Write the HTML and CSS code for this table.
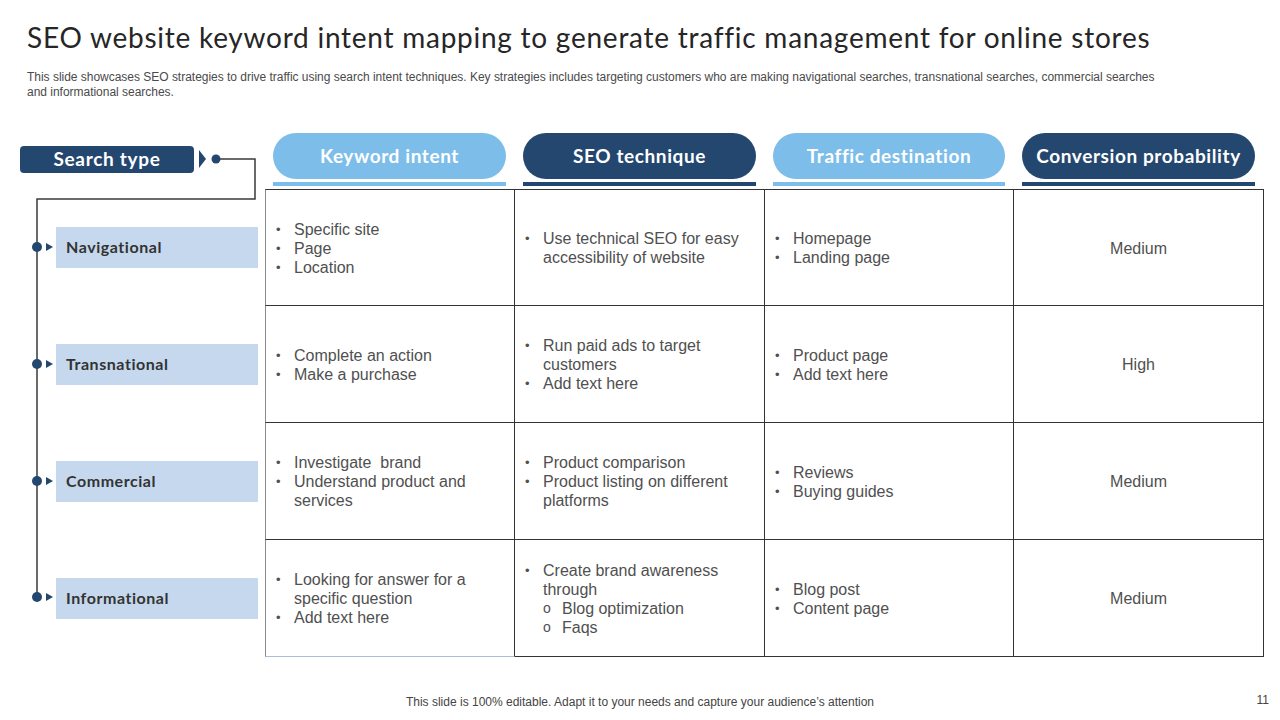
FILE: index.html
```html
<!DOCTYPE html>
<html>
<head>
<meta charset="utf-8">
<link rel="stylesheet" href="styles.css">
</head>
<body>
<div class="slide">
  <header class="head">
    <h1 class="title">SEO website keyword intent mapping to generate traffic management for online stores</h1>
    <p class="desc">This slide showcases SEO strategies to drive traffic using search intent techniques. Key strategies includes targeting customers who are making navigational searches, transnational searches, commercial searches and informational searches.</p>
  </header>

  <svg class="connectors" width="270" height="620" viewBox="0 0 270 620">
    <polyline points="216,159 255,159 255,199 37,199 37,597" fill="none" stroke="#3a3a3a" stroke-width="1.5"/>
    <polygon points="199,150 206,159 199,168" fill="#24476f"/>
    <circle cx="216" cy="159" r="4.5" fill="#24476f"/>
    <circle cx="37" cy="247" r="5" fill="#24476f"/>
    <polygon points="46,243 53,247 46,251" fill="#24476f"/>
    <circle cx="37" cy="364" r="5" fill="#24476f"/>
    <polygon points="46,360 53,364 46,368" fill="#24476f"/>
    <circle cx="37" cy="481" r="5" fill="#24476f"/>
    <polygon points="46,477 53,481 46,485" fill="#24476f"/>
    <circle cx="37" cy="597" r="5" fill="#24476f"/>
    <polygon points="46,593 53,597 46,601" fill="#24476f"/>
  </svg>

  <main class="grid">
    <div class="side-head"><div class="search-type">Search type</div></div>
    <div class="col-head"><div class="pill light">Keyword intent</div><div class="bar light"></div></div>
    <div class="col-head"><div class="pill dark">SEO technique</div><div class="bar dark"></div></div>
    <div class="col-head"><div class="pill light">Traffic destination</div><div class="bar light"></div></div>
    <div class="col-head"><div class="pill dark">Conversion probability</div><div class="bar dark"></div></div>

    <div class="side"><div class="label">Navigational</div></div>
    <div class="cell c1 r1"><ul><li>Specific site</li><li>Page</li><li>Location</li></ul></div>
    <div class="cell r1"><ul><li>Use technical SEO for easy accessibility of website</li></ul></div>
    <div class="cell r1"><ul><li>Homepage</li><li>Landing page</li></ul></div>
    <div class="cell c4 r1">Medium</div>

    <div class="side"><div class="label">Transnational</div></div>
    <div class="cell c1"><ul><li>Complete an action</li><li>Make a purchase</li></ul></div>
    <div class="cell"><ul><li>Run paid ads to target customers</li><li>Add text here</li></ul></div>
    <div class="cell"><ul><li>Product page</li><li>Add text here</li></ul></div>
    <div class="cell c4">High</div>

    <div class="side"><div class="label">Commercial</div></div>
    <div class="cell c1"><ul><li>Investigate&nbsp; brand</li><li>Understand product and services</li></ul></div>
    <div class="cell"><ul><li>Product comparison</li><li>Product listing on different platforms</li></ul></div>
    <div class="cell"><ul><li>Reviews</li><li>Buying guides</li></ul></div>
    <div class="cell c4">Medium</div>

    <div class="side"><div class="label">Informational</div></div>
    <div class="cell c1 last"><ul><li>Looking for answer for a specific question</li><li>Add text here</li></ul></div>
    <div class="cell last"><ul><li>Create brand awareness through<ul class="sub"><li>Blog optimization</li><li>Faqs</li></ul></li></ul></div>
    <div class="cell last"><ul><li>Blog post</li><li>Content page</li></ul></div>
    <div class="cell c4 last">Medium</div>
  </main>

  <footer class="foot">
    <span class="note">This slide is 100% editable. Adapt it to your needs and capture your audience’s attention</span>
    <span class="page">11</span>
  </footer>
</div>
</body>
</html>
```

FILE: styles.css
```css
* { box-sizing: border-box; }
html, body { margin: 0; padding: 0; background: #fff; }
.slide {
  position: relative;
  width: 1280px;
  height: 720px;
  overflow: hidden;
  font-family: "Liberation Sans", Arial, sans-serif;
  color: #404040;
}
.head { padding: 20px 0 0 27px; height: 133px; }
.title {
  margin: 0;
  font-family: "Lato", "Liberation Sans", sans-serif;
  font-weight: 400;
  font-size: 28px;
  line-height: 34px;
  color: #262626;
  letter-spacing: 0.75px;
  white-space: nowrap;
}
.desc {
  margin: 16px 0 0 0;
  width: 1140px;
  font-size: 12px;
  line-height: 15px;
  color: #4a4a4a;
  letter-spacing: -0.02px;
}
.connectors { position: absolute; left: 0; top: 0; pointer-events: none; }
.grid {
  display: grid;
  grid-template-columns: 265px 250px 250px 249px 250px;
  grid-template-rows: 56px 117px 117px 117px 117px;
}
.side-head { padding: 13px 0 0 20px; }
.search-type {
  width: 174px;
  height: 27px;
  background: #24476f;
  border-radius: 4px;
  color: #fff;
  font-family: "Lato", sans-serif;
  font-weight: 700;
  font-size: 19px;
  letter-spacing: 0.7px;
  line-height: 26px;
  text-align: center;
}
.col-head { padding: 0 9px 0 8px; display: flex; flex-direction: column; }
.pill {
  height: 46px;
  border-radius: 23px;
  color: #fff;
  font-family: "Lato", sans-serif;
  font-weight: 700;
  font-size: 19px;
  letter-spacing: 0.6px;
  padding-bottom: 2px;
  display: flex;
  align-items: center;
  justify-content: center;
}
.bar { height: 4px; margin-top: 3px; }
.light { background: #7dbde9; }
.dark { background: #24476f; }
.side { display: flex; align-items: center; padding-left: 56px; }
.label {
  width: 202px;
  height: 41px;
  background: #c5d8ee;
  color: #333;
  font-family: "Lato", sans-serif;
  font-weight: 700;
  font-size: 16px;
  letter-spacing: 0.55px;
  line-height: 40px;
  padding-left: 10px;
}
.cell {
  border-right: 1px solid #333;
  border-bottom: 1px solid #333;
  display: flex;
  align-items: center;
  padding: 1px 10px 0;
  font-size: 16px;
  line-height: 19px;
  color: #505050;
}
.r1 { border-top: 1px solid #333; }
.c1 { border-left: 1px solid #8a8a8a; }
.c1.last { border-bottom-color: #a9bfd4; }
.c4 { justify-content: center; }
.cell ul { margin: 0; padding: 0; list-style: none; }
.cell li { position: relative; padding-left: 18px; }
.cell li::before {
  content: "•";
  position: absolute;
  left: 0;
  top: 0;
  font-size: 13px;
}
.cell ul.sub li { padding-left: 19px; }
.cell ul.sub li::before { content: "o"; font-size: 14px; left: 0; }
.foot {
  position: absolute;
  left: 0; right: 0; top: 695px;
  display: flex;
  justify-content: center;
  font-size: 12px;
  color: #444;
}
.page { position: absolute; right: 11px; top: -2px; }
```
